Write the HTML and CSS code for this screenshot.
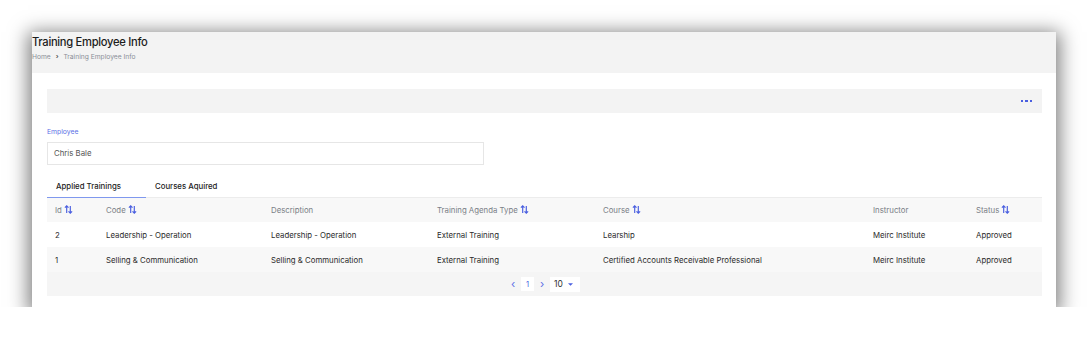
FILE: index.html
```html
<!DOCTYPE html>
<html>
<head>
    <title>Training Employee Info</title>
    <link rel="stylesheet" href="styles.css">
</head>
<body>
    <div class="window">
        <div class="page-head">
            <h1>Training Employee Info</h1>
            <div class="crumbs">Home <span class="sep">&#8250;</span> Training Employee Info</div>
        </div>

        <div class="content">
            <div class="toolbar">
                <span class="more"><i></i><i></i><i></i></span>
            </div>

            <div class="field">
                <label for="employee">Employee</label>
                <div class="input" id="employee">Chris Bale</div>
            </div>

            <div class="tabs">
                <div class="tab active">Applied Trainings</div>
                <div class="tab">Courses Aquired</div>
            </div>

            <table class="grid">
                <colgroup>
                    <col style="width:51px">
                    <col style="width:165px">
                    <col style="width:166px">
                    <col style="width:166px">
                    <col style="width:270px">
                    <col style="width:103px">
                    <col style="width:74px">
                </colgroup>
                <thead>
                    <tr>
                        <th>Id <svg class="sort" viewBox="0 0 10 10"><path d="M3 9V1M1 3l2-2 2 2M7 1v8M5 7l2 2 2-2"/></svg></th>
                        <th>Code <svg class="sort" viewBox="0 0 10 10"><path d="M3 9V1M1 3l2-2 2 2M7 1v8M5 7l2 2 2-2"/></svg></th>
                        <th>Description</th>
                        <th>Training Agenda Type <svg class="sort" viewBox="0 0 10 10"><path d="M3 9V1M1 3l2-2 2 2M7 1v8M5 7l2 2 2-2"/></svg></th>
                        <th>Course <svg class="sort" viewBox="0 0 10 10"><path d="M3 9V1M1 3l2-2 2 2M7 1v8M5 7l2 2 2-2"/></svg></th>
                        <th>Instructor</th>
                        <th>Status <svg class="sort" viewBox="0 0 10 10"><path d="M3 9V1M1 3l2-2 2 2M7 1v8M5 7l2 2 2-2"/></svg></th>
                    </tr>
                </thead>
                <tbody>
                    <tr>
                        <td>2</td>
                        <td>Leadership - Operation</td>
                        <td>Leadership - Operation</td>
                        <td>External Training</td>
                        <td>Learship</td>
                        <td>Meirc Institute</td>
                        <td>Approved</td>
                    </tr>
                    <tr class="odd">
                        <td>1</td>
                        <td>Selling &amp; Communication</td>
                        <td>Selling &amp; Communication</td>
                        <td>External Training</td>
                        <td>Certified Accounts Receivable Professional</td>
                        <td>Meirc Institute</td>
                        <td>Approved</td>
                    </tr>
                </tbody>
            </table>

            <div class="pager">
                <span class="arrow">&#8249;</span>
                <span class="page">1</span>
                <span class="arrow">&#8250;</span>
                <span class="rows">10 <svg class="caret" viewBox="0 0 8 4"><path d="M0 0h8L4 4z"/></svg></span>
            </div>
        </div>
    </div>
</body>
</html>
```

FILE: styles.css
```css
body {
    margin: 0;
    background: #fff;
    font-family: Inter, "Noto Sans", sans-serif;
    color: #333;
}

.window {
    margin: 32px 0 0 32px;
    width: 1024px;
    height: 275px;
    background: #fff;
    box-shadow: 0 4px 18px 4px rgba(0,0,0,0.5);
}

.page-head {
    height: 41px;
    background: #f3f3f3;
    box-sizing: border-box;
    padding-top: 3px;
}

.page-head h1 {
    margin: 0;
    font-size: 11.2px;
    font-weight: 500;
    color: #1c1c1c;
    line-height: 14px;
    letter-spacing: -0.3px;
}

.crumbs {
    font-size: 6.7px;
    color: #8a8f98;
    margin-top: 4px;
}

.crumbs .sep {
    color: #555;
    margin: 0 3px;
    font-weight: bold;
}

.content {
    padding: 16px 14px 0 15px;
}

.toolbar {
    height: 24px;
    background: #f3f3f3;
    display: flex;
    align-items: center;
    justify-content: flex-end;
    padding-right: 10px;
}

.more {
    display: flex;
    gap: 2px;
}

.more i {
    width: 2.5px;
    height: 2.5px;
    background: #4a5fe0;
}

.field {
    margin-top: 14px;
}

.field label {
    display: block;
    font-size: 6.8px;
    color: #5b6fe6;
    line-height: 10px;
}

.input {
    width: 437px;
    height: 23px;
    box-sizing: border-box;
    border: 1px solid #e6e6e6;
    margin-top: 5px;
    padding: 0 6px;
    font-size: 7.8px;
    line-height: 21px;
    color: #555;
}

.tabs {
    display: flex;
    margin-top: 9px;
    border-bottom: 1px solid #ececec;
}

.tab {
    width: 99px;
    box-sizing: border-box;
    padding: 7px 0 6px 9px;
    font-size: 7.8px;
    font-weight: 500;
    color: #222;
}

.tab.active {
    border-bottom: 1px solid #7f98ee;
    margin-bottom: -1px;
}

.grid {
    width: 995px;
    border-collapse: collapse;
    table-layout: fixed;
    font-size: 7.8px;
}

.grid th {
    background: #f8f8f8;
    color: #7b7f87;
    font-weight: 400;
    text-align: left;
    height: 24px;
    padding: 0 8px;
}

.grid td {
    height: 25px;
    padding: 0 8px;
    color: #2b2b2b;
}

.grid tr.odd td {
    background: #f8f8f8;
}

.sort {
    width: 9px;
    height: 9px;
    vertical-align: -1px;
    fill: none;
    stroke: #4a5fe0;
    stroke-width: 1.3;
}

.pager {
    width: 995px;
    height: 24px;
    background: #f5f5f5;
    display: flex;
    align-items: center;
    justify-content: center;
    gap: 4px;
    font-size: 7.5px;
}

.pager .arrow {
    color: #5b6fe6;
    font-size: 11px;
    width: 8px;
    text-align: center;
}

.pager .page {
    width: 13px;
    height: 14px;
    background: #fff;
    color: #4a5fe0;
    display: flex;
    align-items: center;
    justify-content: center;
}

.pager .rows {
    width: 30px;
    height: 15px;
    background: #fff;
    display: flex;
    align-items: center;
    gap: 5px;
    padding-left: 4px;
    box-sizing: border-box;
    font-size: 8.5px;
    color: #333;
}

.caret {
    width: 5px;
    height: 3px;
    fill: #4a5fe0;
}
```
